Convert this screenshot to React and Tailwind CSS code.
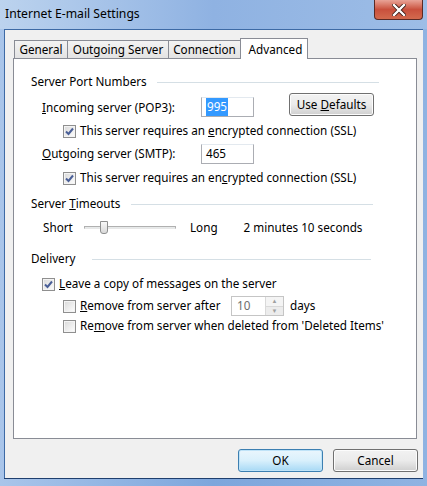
import React from 'react';

const font = { fontFamily: '"Noto Sans", "Open Sans", sans-serif' };

function Check({ checked }) {
  return (
    <span className="flex h-[13px] w-[13px] shrink-0 items-center justify-center border border-[#8f8f8f] bg-white">
      <span className="flex h-[11px] w-[11px] items-center justify-center border border-[#f4f4f4] bg-gradient-to-br from-[#dcdcdc] to-[#fbfbfb]">
        {checked && (
          <svg width="9" height="9" viewBox="0 0 9 9">
            <path d="M1 4.5 L3.5 7 L8 1.5" fill="none" stroke="#4a5f97" strokeWidth="2" />
          </svg>
        )}
      </span>
    </span>
  );
}

function Section({ title, tw, lw }) {
  return (
    <div className="flex h-4 items-center">
      <span className={tw}>{title}</span>
      <span className={`h-px bg-[#d5dfe5] ${lw}`} />
    </div>
  );
}

function Box({ children, w = 'w-[53px]' }) {
  return (
    <div className={`flex h-[20px] ${w} items-center border border-[#abadb3] border-t-[#e3e9ef] bg-white px-[4px]`}>
      {children}
    </div>
  );
}

function Btn({ children, primary, w }) {
  return (
    <button
      className={`flex h-[23px] ${w} items-center justify-center rounded-[3px] border ${
        primary
          ? 'border-[#3c7fb1] bg-gradient-to-b from-[#eaf6fd] via-[#d9f0fc] to-[#a7d9f5] shadow-[inset_0_0_0_1px_#bfe3f8]'
          : 'border-[#707070] bg-gradient-to-b from-[#f2f2f2] via-[#ebebeb] to-[#cfcfcf] shadow-[inset_0_0_0_1px_#fcfcfc]'
      } text-black`}
    >
      <span className="whitespace-pre">{children}</span>
    </button>
  );
}

export default function App() {
  const tabs = [
    ['General', 'w-[54px]'],
    ['Outgoing Server', 'w-[102px]'],
    ['Connection', 'w-[73px]'],
  ];
  return (
    <div style={font} className="h-[486px] w-[427px] overflow-hidden whitespace-nowrap bg-gradient-to-r from-[#a9c5ea] via-[#7da6dc] to-[#8fb3e2] text-[11.7px] text-black">
      <div className="flex h-[29px] items-start justify-between bg-gradient-to-r from-[#bcd3ee] via-[#8fb2e2] to-[#9dbde6]">
        <span className="mt-[5px] pl-[5px] text-[12.2px] text-black">Internet E-mail Settings</span>
        <span className="mr-[4px] flex h-[20px] w-[49px] items-center justify-center rounded-b-[4px] border border-t-0 border-[#5a2a25] bg-gradient-to-b from-[#e8a397] via-[#c9503d] to-[#d36a4e]">
          <svg width="14" height="12" viewBox="0 0 14 12">
            <path d="M2 1 L12 11 M12 1 L2 11" stroke="#3a1a14" strokeWidth="4" strokeLinecap="square" />
            <path d="M2 1 L12 11 M12 1 L2 11" stroke="#ffffff" strokeWidth="2.4" strokeLinecap="square" />
          </svg>
        </span>
      </div>
      <div className="ml-[4px] flex h-[449px] w-[419px] flex-col border-t border-l border-[#3d6aa5] bg-[#f0f0f0]">
        <div className="ml-[8px] mt-[7px] flex h-[21px] items-end pl-px">
          {tabs.map(([t, w]) => (
            <div key={t} className={`flex h-[18px] ${w} items-center justify-center border border-b-0 border-[#898c95] bg-gradient-to-b from-[#f3f3f3] to-[#e3e3e3] -mr-px`}>
              {t}
            </div>
          ))}
          <div className="relative z-10 -mb-px flex h-[21px] w-[68px] items-start justify-center border border-b-0 border-[#898c95] bg-white pt-[2px] pl-[3px]">
            Advanced
          </div>
        </div>
        <div className="ml-[8px] flex h-[381px] w-[404px] flex-col border border-[#898c95] bg-white pl-[17px]">
          <div className="mt-[15px]">
            <Section title="Server Port Numbers" tw="w-[126px]" lw="w-[222px]" />
          </div>
          <div className="ml-[11px] mt-[3px] flex h-[25px] items-start">
            <span className="mt-[6px] w-[159px]"><u>I</u>ncoming server (POP3):</span>
            <div className="mt-[4px]">
              <Box><span className="bg-[#3399ff] px-[1px] text-white">995</span></Box>
            </div>
            <div className="ml-[35px]">
              <Btn w="w-[85px]">Use <u>D</u>efaults</Btn>
            </div>
          </div>
          <div className="ml-[32px] mt-[6px] flex h-[14px] items-center gap-[4px]">
            <Check checked />
            <span>This server requires an <u>e</u>ncrypted connection (SSL)</span>
          </div>
          <div className="ml-[11px] mt-[6px] flex h-[20px] items-center">
            <span className="w-[159px]"><u>O</u>utgoing server (SMTP):</span>
            <Box>465</Box>
          </div>
          <div className="ml-[32px] mt-[7px] flex h-[14px] items-center gap-[4px]">
            <Check checked />
            <span>This server requires an en<u>c</u>rypted connection (SSL)</span>
          </div>
          <div className="mt-[11px]">
            <Section title={<>Server <u>T</u>imeouts</>} tw="w-[100px]" lw="w-[242px]" />
          </div>
          <div className="ml-[12px] mt-[8px] flex h-[16px] items-center">
            <span className="w-[41px]">Short</span>
            <div className="relative h-[16px] w-[92px]">
              <div className="absolute left-0 right-0 top-[6px] h-[3px] border border-[#b0b0b0] border-b-[#e7e7e7] bg-[#e7eaea]" />
              <div className="absolute left-[16px] top-[1px] h-[13px] w-[8px] rounded-b-[3px] border border-[#8e8f8f] bg-gradient-to-b from-[#f8f8f8] to-[#d9d9d9]" />
            </div>
            <span className="ml-[14px]">Long</span>
            <span className="ml-[26px]">2 minutes 10 seconds</span>
          </div>
          <div className="mt-[15px]">
            <Section title="Delivery" tw="w-[61px]" lw="w-[279px]" />
          </div>
          <div className="ml-[11px] mt-[10px] flex h-[14px] items-center gap-[4px]">
            <Check checked />
            <span><u>L</u>eave a copy of messages on the server</span>
          </div>
          <div className="ml-[32px] mt-[5px] flex h-[20px] items-center">
            <Check />
            <span className="ml-[4px] w-[151px]"><u>R</u>emove from server after</span>
            <div className="flex h-[20px] w-[53px] items-center border border-[#c5c5c5] bg-white">
              <span className="flex-1 pl-[5px] text-[#6d6d6d]">10</span>
              <div className="flex h-full w-[18px] flex-col border-l border-[#d9d9d9]">
                <span className="flex flex-1 items-center justify-center bg-[#f4f4f4] text-[6px] leading-none text-[#a0a0a0]">▲</span>
                <span className="flex flex-1 items-center justify-center border-t border-[#d9d9d9] bg-[#ececec] text-[6px] leading-none text-[#a0a0a0]">▼</span>
              </div>
            </div>
            <span className="ml-[6px]">days</span>
          </div>
          <div className="ml-[32px] mt-[3px] flex h-[14px] items-center gap-[4px]">
            <Check />
            <span>Re<u>m</u>ove from server when deleted from 'Deleted Items'</span>
          </div>
        </div>
        <div className="mr-[5px] mt-[10px] flex justify-end gap-[10px]">
          <Btn primary w="w-[85px]">OK</Btn>
          <Btn w="w-[85px]">Cancel</Btn>
        </div>
      </div>
      <div className="ml-[4px] h-px w-[419px] bg-[#1f3f6e]" />
    </div>
  );
}
